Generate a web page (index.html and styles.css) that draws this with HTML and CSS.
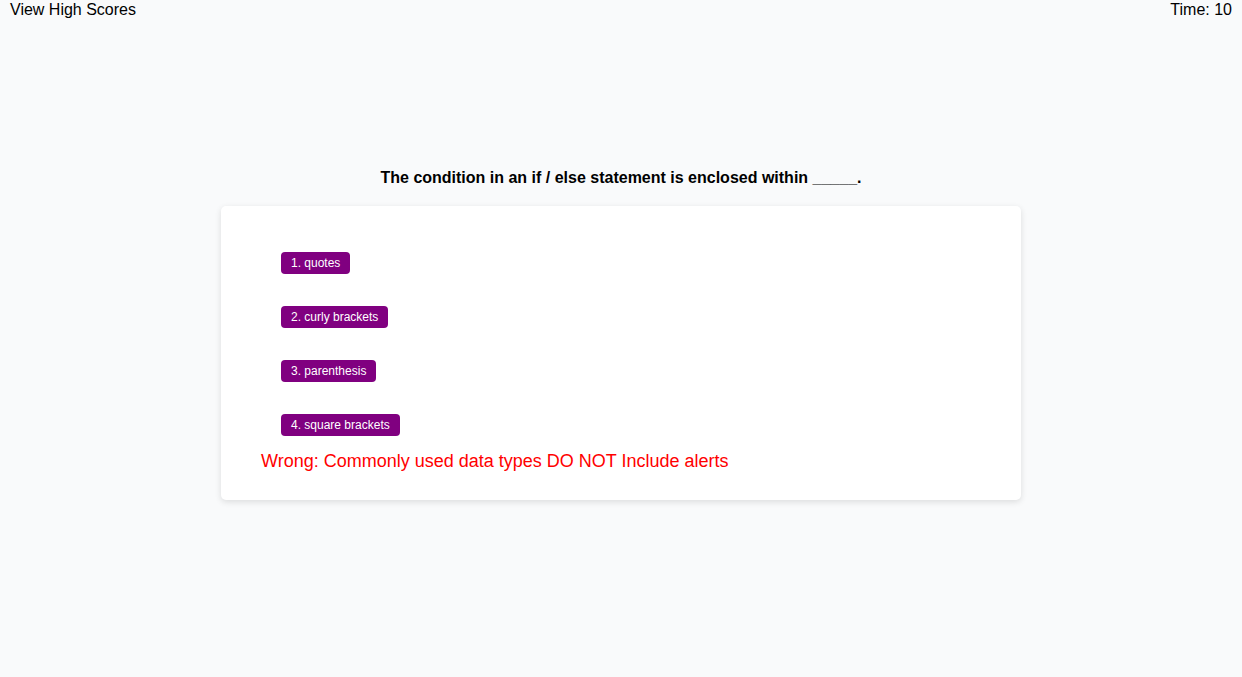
FILE: index.html
```html
<!DOCTYPE html>
<html>
<head>
<meta charset="utf-8">
<title>Quiz</title>
<link rel="stylesheet" href="styles.css">
</head>
<body>
<header class="top-bar">
  <a class="high-scores">View High Scores</a>
  <span class="timer">Time: 10</span>
</header>
<main class="quiz">
  <h2 class="question">The condition in an if / else statement is enclosed within _____.</h2>
  <section class="card">
    <div class="choices">
      <button class="choice">1. quotes</button>
      <button class="choice">2. curly brackets</button>
      <button class="choice">3. parenthesis</button>
      <button class="choice">4. square brackets</button>
    </div>
    <p class="feedback">Wrong: Commonly used data types DO NOT Include alerts</p>
  </section>
</main>
</body>
</html>
```
FILE: styles.css
```css
html, body {
  margin: 0;
  padding: 0;
}
body {
  background: #f9fafb;
  font-family: "Liberation Sans", Arial, sans-serif;
  color: #000;
  min-height: 677px;
}
.top-bar {
  display: flex;
  justify-content: space-between;
  padding: 0 10px;
  font-size: 16px;
  line-height: 19px;
}
.high-scores {
  color: #000;
  cursor: pointer;
}
.quiz {
  display: flex;
  flex-direction: column;
  align-items: center;
  padding-top: 150px;
}
.question {
  margin: 0 0 19px 0;
  font-size: 16px;
  line-height: 18px;
  font-weight: bold;
  text-align: center;
}
.card {
  box-sizing: border-box;
  width: 800px;
  background: #ffffff;
  border-radius: 5px;
  box-shadow: 0 2px 6px rgba(0, 0, 0, 0.12);
  padding: 46px 40px 28px 40px;
}
.choices {
  display: flex;
  flex-direction: column;
  align-items: flex-start;
  gap: 32px;
  padding-left: 20px;
}
.choice {
  background: #800080;
  color: #ffffff;
  border: none;
  border-radius: 4px;
  font-family: "Liberation Sans", Arial, sans-serif;
  font-size: 12px;
  line-height: 15px;
  padding: 4px 10px 3px 10px;
  margin: 0;
  cursor: pointer;
}
.feedback {
  margin: 15px 0 0 0;
  color: #ff0000;
  font-size: 18px;
  line-height: 21px;
}
```
